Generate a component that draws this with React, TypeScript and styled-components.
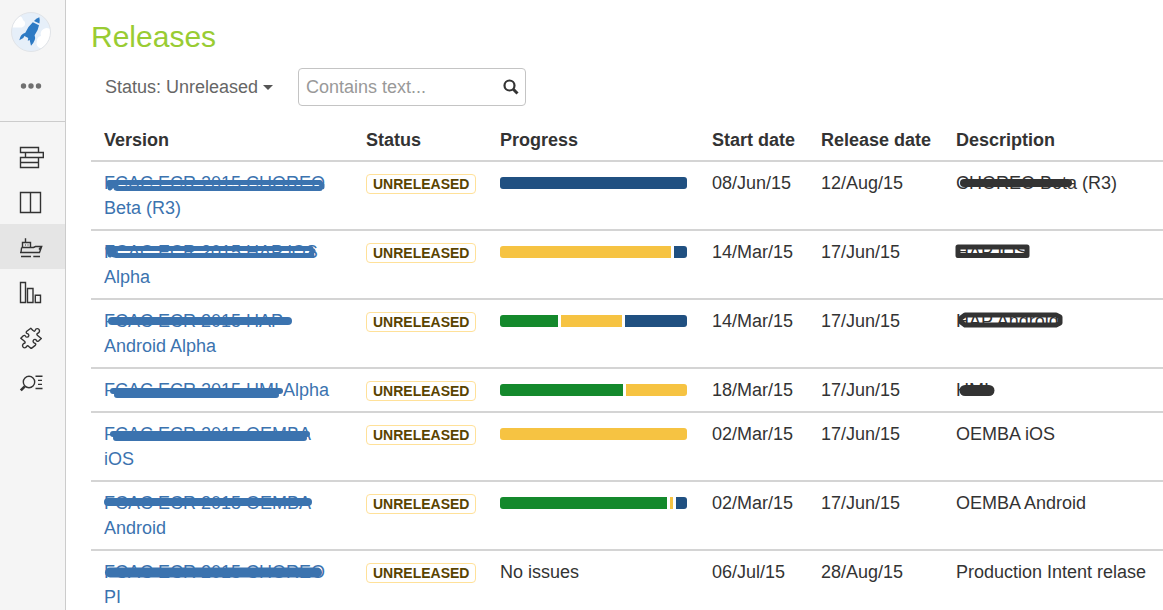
import React from "react";
import styled, { createGlobalStyle } from "styled-components";

const NAVY = "#205081";
const AMBER = "#f6c342";
const GREEN = "#14892c";
const LINK = "#3b73af";
const INK = "#333333";

const GlobalStyle = createGlobalStyle`
  * { box-sizing: border-box; }
  body {
    margin: 0;
    background: #fff;
    color: ${INK};
    font: 18px/25px "Liberation Sans", Arial, sans-serif;
  }
`;

const Shell = styled.div`
  display: flex;
  height: 100vh;
`;

const Sidebar = styled.aside`
  flex: none;
  width: 66px;
  background: #f5f5f5;
  border-right: 1px solid #ccc;
`;

const ProjectHeader = styled.div`
  display: flex;
  flex-direction: column;
  align-items: flex-start;
  gap: 23px;
  height: 122px;
  padding: 12px 0 0 11px;
  border-bottom: 1px solid #ccc;
`;

const ProjectLink = styled.a`
  display: block;
  height: 40px;
`;

const IconButton = styled.button`
  display: flex;
  align-items: center;
  justify-content: center;
  width: 40px;
  height: 22px;
  padding: 0;
  border: 0;
  background: none;
`;

const Nav = styled.nav`
  display: flex;
  flex-direction: column;
  padding-top: 12px;
`;

const NavItem = styled.a<{ $active?: boolean }>`
  display: flex;
  align-items: center;
  height: 45px;
  padding-left: 18px;
  background: ${(p) => (p.$active ? "#e5e5e5" : "transparent")};
`;

const NavIcon = styled.svg`
  display: block;
  width: 26px;
  height: 25px;
  fill: none;
  stroke: ${INK};
  stroke-width: 1.4;
`;

const Main = styled.main`
  flex: 1;
  min-width: 0;
  padding: 19px 0 0 25px;
  overflow: auto;
  scrollbar-width: none;
`;

const Title = styled.h1`
  margin: 0 0 13px;
  color: #99cc33;
  font-size: 30px;
  font-weight: 400;
  line-height: 36px;
`;

const Toolbar = styled.form`
  display: flex;
  align-items: center;
  gap: 25px;
  padding-left: 14px;
`;

const StatusFilter = styled.label`
  display: flex;
  align-items: center;
  gap: 4px;
`;

const StatusSelect = styled.select`
  appearance: none;
  padding: 0;
  border: 0;
  background: none;
  color: #666;
  font: inherit;
`;

const SearchBox = styled.label`
  display: flex;
  align-items: center;
  width: 228px;
  height: 38px;
  padding: 0 6px 0 7px;
  border: 1px solid #c4c4c4;
  border-radius: 4px;
`;

const SearchInput = styled.input`
  flex: 1;
  min-width: 0;
  padding: 0;
  border: 0;
  outline: 0;
  color: ${INK};
  font: inherit;
  &::placeholder { color: #999; opacity: 1; }
`;

const Table = styled.table`
  width: 100%;
  margin-top: 13px;
  border-spacing: 0;
  table-layout: fixed;
`;

const Column = styled.col<{ $width?: number }>`
  width: ${(p) => (p.$width ? `${p.$width}px` : "auto")};
`;

const HeadCell = styled.th`
  padding: 9px 12px 7px 13px;
  border-bottom: 2px solid #d4d4d4;
  font-weight: 700;
  text-align: left;
  white-space: nowrap;
`;

const Cell = styled.td`
  padding: 9px 12px 8px 13px;
  border-bottom: 2px solid #d4d4d4;
  vertical-align: top;
`;

const CellText = styled.div`
  position: relative;
`;

const VersionLink = styled.a`
  color: ${LINK};
  text-decoration: none;
`;

const Scribble = styled.svg<{ $color: string }>`
  position: absolute;
  left: 0;
  top: 0;
  width: 100%;
  height: 25px;
  overflow: visible;
  pointer-events: none;
  fill: none;
  stroke: ${(p) => p.$color};
  stroke-linecap: round;
  stroke-linejoin: round;
`;

const Badge = styled.span`
  display: block;
  width: fit-content;
  margin-top: 3px;
  padding: 0 6px;
  border: 1px solid #ffe199;
  border-radius: 4px;
  color: #594300;
  font-size: 14px;
  font-weight: 700;
  line-height: 18px;
`;

const Progress = styled.div`
  display: flex;
  gap: 3px;
  height: 12px;
  margin-top: 6px;
  border-radius: 3px;
  overflow: hidden;
`;

const Segment = styled.span<{ $color: string; $share: number }>`
  flex: ${(p) => p.$share} 1 0;
  background: ${(p) => p.$color};
`;

type Stroke = { d: string; w: number };

type Release = {
  version: string;
  versionMarks: Stroke[];
  progress: [string, number][];
  start: string;
  release: string;
  description: string;
  descriptionMarks?: Stroke[];
};

const releases: Release[] = [
  {
    version: "FCAC ECR 2015 CHOREO Beta (R3)",
    versionMarks: [
      { d: "M5 11.500H216M13 17.500H216M5 11.500L6 17L10 12L12 17M216 12L218 14V16", w: 5 },
    ],
    progress: [[NAVY, 1]],
    start: "08/Jun/15",
    release: "12/Aug/15",
    description: "CHOREO Beta (R3)",
    descriptionMarks: [{ d: "M8 12H112", w: 8 }],
  },
  {
    version: "FCAC ECR 2015 HAP iOS Alpha",
    versionMarks: [
      { d: "M4 8.500H207M12 15.500H208M4 8.500L6 15L10 9L10 15M206 8.500L209 11L206 15", w: 5 },
    ],
    progress: [[AMBER, 171], [NAVY, 13]],
    start: "14/Mar/15",
    release: "17/Jun/15",
    description: "HAP iOS",
    descriptionMarks: [{ d: "M2 7H71V15.500H2Z", w: 5 }],
  },
  {
    version: "FCAC ECR 2015 HAP Android Alpha",
    versionMarks: [{ d: "M8 12H184", w: 8 }],
    progress: [[GREEN, 58], [AMBER, 61], [NAVY, 62]],
    start: "14/Mar/15",
    release: "17/Jun/15",
    description: "HAP Android",
    descriptionMarks: [{ d: "M9 6H100L104 8V14L100 16H9L5 13V9Z", w: 5 }],
  },
  {
    version: "FCAC ECR 2015 HMI Alpha",
    versionMarks: [{ d: "M9 13H176M13 17H172", w: 6 }],
    progress: [[GREEN, 123], [AMBER, 61]],
    start: "18/Mar/15",
    release: "17/Jun/15",
    description: "HMI",
    descriptionMarks: [{ d: "M9 12.500H33", w: 11 }],
  },
  {
    version: "FCAC ECR 2015 OEMBA iOS",
    versionMarks: [{ d: "M9 12H203M12 16H200", w: 6 }],
    progress: [[AMBER, 1]],
    start: "02/Mar/15",
    release: "17/Jun/15",
    description: "OEMBA iOS",
  },
  {
    version: "FCAC ECR 2015 OEMBA Android",
    versionMarks: [{ d: "M4 11H204", w: 8 }],
    progress: [[GREEN, 167], [AMBER, 3], [NAVY, 11]],
    start: "02/Mar/15",
    release: "17/Jun/15",
    description: "OEMBA Android",
  },
  {
    version: "FCAC ECR 2015 CHOREO PI",
    versionMarks: [{ d: "M6 12.500H213", w: 10 }],
    progress: [],
    start: "06/Jul/15",
    release: "28/Aug/15",
    description: "Production Intent relase",
  },
];

const Marks = ({ marks, color }: { marks: Stroke[]; color: string }) => (
  <Scribble $color={color} aria-hidden="true">
    {marks.map((m) => (
      <path key={m.d} d={m.d} strokeWidth={m.w} />
    ))}
  </Scribble>
);

const ProjectLogo = () => (
  <svg width="40" height="40" viewBox="0 0 40 40" aria-hidden="true">
    <defs>
      <clipPath id="disc">
        <circle cx="20" cy="20" r="19.500" />
      </clipPath>
    </defs>
    <circle cx="20" cy="20" r="19.500" fill="#e6eff9" />
    <g clipPath="url(#disc)" fill="#fff">
      <path d="M0 15.500H11A4 4 0 0 0 12 8A5 5 0 0 0 8 4L0 4Z" />
      <path d="M40 36H29A5 5 0 0 1 26 29A4.500 4.500 0 0 1 30 24A6 6 0 0 1 40 18Z" />
    </g>
    <circle cx="20" cy="20" r="19.500" fill="none" stroke="#e0e3e7" strokeWidth="1" />
    <g fill="#2d7ac4">
      <path d="M28.300 5.200Q25 6.200 23 9L28.400 11.600Q29.200 8 28.300 5.200Z" />
      <path d="M21.800 10.300L28 13.200Q27.200 18.500 23.600 23.300Q25.600 28 20 33.700L18.700 28L16.800 28.700L17.200 26L13.400 24L12.300 26L8.300 28.300Q9.300 22 14.300 20.800Q17 14.500 21.800 10.300Z" />
    </g>
  </svg>
);

const navItems = [
  {
    label: "Backlog",
    icon: (
      <path d="M2.500 3.500H20.500V8.500H2.500ZM7.500 8.500H25.300V13.500H7.500ZM2.500 13.500H20.500V18.500H2.500ZM2.500 18.500H20.500V23.500H2.500Z" />
    ),
  },
  { label: "Board", icon: <path d="M2.500 3.500H22.500V23.500H2.500ZM12.500 3.500V23.500" /> },
  {
    label: "Releases",
    active: true,
    icon: (
      <>
        <path d="M7.500 4.300V8.500M4.500 13.500V8.500H12.500V13.500M3.500 13.500H15.500L17.500 12.500H23.700L21.500 18.500H2M3.600 13.500L3 18.500M21 15.500L23 12.800M3 22.500H13M15.300 22.500H22" />
        <path d="M7.500 10.500V11.500M10 10.500V11.500" strokeWidth="1" />
      </>
    ),
  },
  {
    label: "Reports",
    icon: <path d="M2.500 3.500H7.500V23.500H2.500ZM9.500 9.500H15V23.500H9.500ZM17.300 16.300H22.500V23.500H17.300Z" />,
  },
  {
    label: "Add-ons",
    icon: (
      <path
        strokeLinejoin="round"
        d="M12.800 4.200L15 6.400C16 7.600 17 7.400 17.300 6.200C17.800 4.300 20.600 4 21.300 6C21.900 7.800 20.800 9 19.600 9.300C18.600 9.600 18.700 10.800 19.600 11.500L23.300 14.500L20.600 17C19.500 17.800 18.800 17.200 18.400 16.400C17.700 15 15.700 15.100 15.200 16.600C14.800 18 15.800 19 17 19.300C18 19.700 18 20.700 17.200 21.400L13.200 24.600L10.800 22.400C9.800 21.400 8.900 21.600 8.600 22.600C8 24.200 5.300 24.400 4.700 22.400C4.200 20.600 5.200 19.600 6.400 19.300C7.400 19 7.300 18 6.500 17.200L2.800 14.200L5.300 11.800C6.300 11 7.100 11.300 7.500 12.200C8.200 13.600 10.200 13.400 10.700 12C11.100 10.600 10.200 9.800 9 9.400C8 9 8 8 8.800 7.300Z"
      />
    ),
  },
  {
    label: "Issues",
    icon: (
      <>
        <circle cx="11" cy="13" r="5.700" />
        <path d="M17.500 7.200H24.500M20 11.400H24M20 15.400H24M17.500 19.500H24.500" />
        <path d="M2.800 21.300L6.800 17.300" strokeWidth="2.600" />
      </>
    ),
  },
];

const headings = ["Version", "Status", "Progress", "Start date", "Release date", "Description"];

export default function App() {
  return (
    <>
      <GlobalStyle />
      <Shell>
        <Sidebar>
          <ProjectHeader>
            <ProjectLink href="#project" aria-label="Project">
              <ProjectLogo />
            </ProjectLink>
            <IconButton type="button" aria-label="More">
              <svg width="22" height="6" viewBox="0 0 22 6" fill="#707070" aria-hidden="true">
                <circle cx="3.500" cy="3" r="2.700" />
                <circle cx="11" cy="3" r="2.700" />
                <circle cx="18.500" cy="3" r="2.700" />
              </svg>
            </IconButton>
          </ProjectHeader>
          <Nav>
            {navItems.map((item) => (
              <NavItem key={item.label} href={`#${item.label}`} aria-label={item.label} $active={item.active}>
                <NavIcon viewBox="0 0 26 25" aria-hidden="true">{item.icon}</NavIcon>
              </NavItem>
            ))}
          </Nav>
        </Sidebar>
        <Main>
          <Title>Releases</Title>
          <Toolbar>
            <StatusFilter>
              <StatusSelect aria-label="Status" defaultValue="unreleased">
                <option value="unreleased">Status: Unreleased</option>
                <option value="released">Status: Released</option>
              </StatusSelect>
              <svg width="10" height="5" viewBox="0 0 10 5" fill="#555" aria-hidden="true">
                <path d="M0 0H10L5 5Z" />
              </svg>
            </StatusFilter>
            <SearchBox>
              <SearchInput type="text" placeholder="Contains text..." aria-label="Contains text" />
              <svg width="16" height="16" viewBox="0 0 16 16" fill="none" stroke={INK} aria-hidden="true">
                <circle cx="6.500" cy="6.500" r="5" strokeWidth="2.200" />
                <path d="M10.300 10.300L14.500 14.500" strokeWidth="3" />
              </svg>
            </SearchBox>
          </Toolbar>
          <Table>
            <colgroup>
              <Column $width={262} />
              <Column $width={134} />
              <Column $width={212} />
              <Column $width={109} />
              <Column $width={135} />
              <Column />
            </colgroup>
            <thead>
              <tr>
                {headings.map((h) => (
                  <HeadCell key={h} scope="col">{h}</HeadCell>
                ))}
              </tr>
            </thead>
            <tbody>
              {releases.map((r) => (
                <tr key={r.version}>
                  <Cell>
                    <CellText>
                      <VersionLink href="#version">{r.version}</VersionLink>
                      <Marks marks={r.versionMarks} color={LINK} />
                    </CellText>
                  </Cell>
                  <Cell>
                    <Badge>UNRELEASED</Badge>
                  </Cell>
                  <Cell>
                    {r.progress.length === 0 ? (
                      "No issues"
                    ) : (
                      <Progress>
                        {r.progress.map(([color, share]) => (
                          <Segment key={color} $color={color} $share={share} />
                        ))}
                      </Progress>
                    )}
                  </Cell>
                  <Cell>{r.start}</Cell>
                  <Cell>{r.release}</Cell>
                  <Cell>
                    <CellText>
                      {r.description}
                      {r.descriptionMarks && <Marks marks={r.descriptionMarks} color={INK} />}
                    </CellText>
                  </Cell>
                </tr>
              ))}
            </tbody>
          </Table>
        </Main>
      </Shell>
    </>
  );
}
